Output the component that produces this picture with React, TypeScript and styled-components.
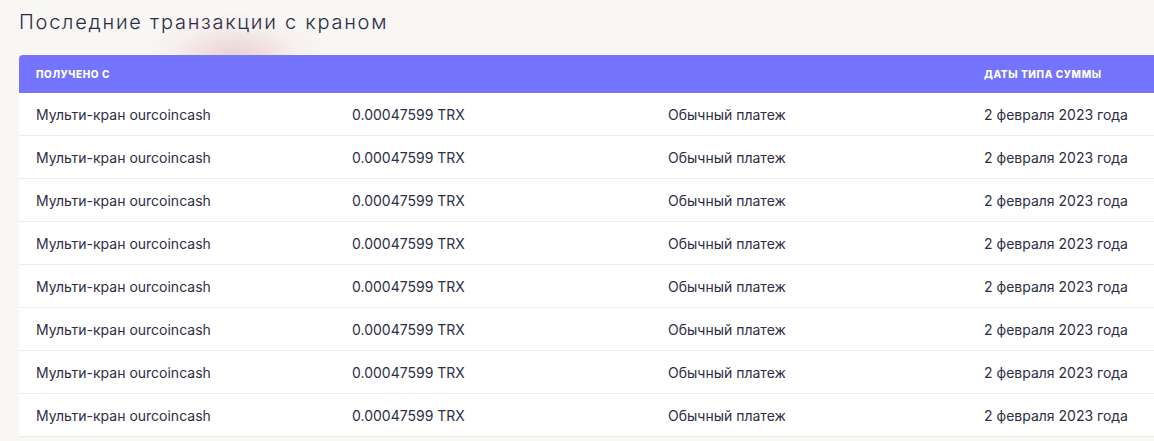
import React from "react";
import styled, { createGlobalStyle } from "styled-components";

const Global = createGlobalStyle`
  html, body { margin: 0; padding: 0; overflow: hidden; }
  body {
    background: #f9f7f4;
    font-family: Inter, "Noto Sans", sans-serif;
    width: 1154px;
    height: 441px;
  }
`;

const Page = styled.div`
  position: relative;
  padding: 9px 0 0 19px;
  width: 1400px;
`;

const Glow = styled.div`
  position: absolute;
  left: 145px;
  top: 12px;
  width: 180px;
  height: 90px;
  border-radius: 50%;
  background: radial-gradient(ellipse at center, rgba(214, 160, 165, 0.45) 0%, rgba(230, 200, 200, 0.15) 50%, rgba(249, 247, 244, 0) 75%);
  pointer-events: none;
`;

const Title = styled.h2`
  position: relative;
  margin: 0 0 19px;
  font-family: Inter, sans-serif;
  font-weight: 300;
  font-size: 20px;
  line-height: 27px;
  letter-spacing: 1.75px;
  color: #2b2c44;
`;

const Table = styled.div`
  position: relative;
  width: 1264px;
  background: #ffffff;
  border-radius: 4px 4px 0 0;
  overflow: hidden;
`;

const Row = styled.div<{ $head?: boolean }>`
  display: grid;
  grid-template-columns: repeat(4, 316px);
  align-items: center;
  height: ${(p) => (p.$head ? "38px" : "42px")};
  background: ${(p) => (p.$head ? "#7474ff" : "#ffffff")};
  border-bottom: ${(p) => (p.$head ? "none" : "1px solid #ececf0")};
`;

const HeadCell = styled.div`
  padding-left: 17px;
  font-family: Inter, sans-serif;
  font-weight: 800;
  font-size: 10px;
  letter-spacing: 0.6px;
  color: #ffffff;
  text-transform: uppercase;
`;

const Cell = styled.div`
  padding-left: 17px;
  font-family: Inter, sans-serif;
  font-weight: 400;
  font-size: 14px;
  color: #2e2e44;
  white-space: nowrap;
`;

const rows = Array.from({ length: 8 }, () => ({
  from: "Мульти-кран ourcoincash",
  amount: "0.00047599 TRX",
  type: "Обычный платеж",
  date: "2 февраля 2023 года",
}));

export default function App() {
  return (
    <>
      <Global />
      <Page>
        <Glow />
        <Title>Последние транзакции с краном</Title>
        <Table>
          <Row $head>
            <HeadCell>Получено с</HeadCell>
            <HeadCell />
            <HeadCell />
            <HeadCell>Даты типа суммы</HeadCell>
          </Row>
          {rows.map((r, i) => (
            <Row key={i}>
              <Cell>{r.from}</Cell>
              <Cell>{r.amount}</Cell>
              <Cell>{r.type}</Cell>
              <Cell>{r.date}</Cell>
            </Row>
          ))}
        </Table>
      </Page>
    </>
  );
}
